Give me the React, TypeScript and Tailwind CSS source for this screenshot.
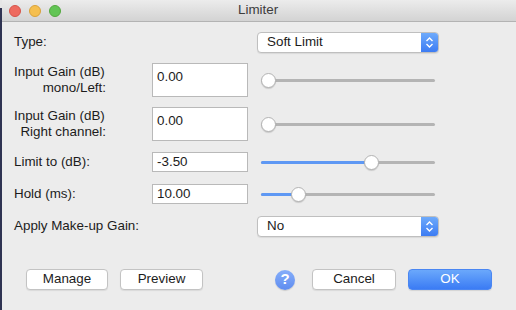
import React from "react";

const font = { fontFamily: '"Helvetica Neue", "Liberation Sans", Arial, sans-serif' };

function Slider({ frac }: { frac: number }) {
  const thumbCenter = 7 + frac * 159;
  return (
    <div className="flex h-full items-center pl-[4px]">
      <div className="relative h-[3px] w-[174px] rounded-full bg-[#b4b4b4]">
        <div
          className="h-[3px] rounded-full bg-[#5e98f4]"
          style={{ width: frac > 0 ? thumbCenter : 0 }}
        />
        <div
          className="absolute top-[-6px] h-[15px] w-[15px] rounded-full border border-[#b3b3b3] bg-white shadow-[0_1px_1px_rgba(0,0,0,0.15)]"
          style={{ left: thumbCenter - 7.5 }}
        />
      </div>
    </div>
  );
}

function Select({ value }: { value: string }) {
  return (
    <div className="flex h-[21px] w-[182px] rounded-[4px] border border-[#bfbfbf] bg-white shadow-[0_1px_1px_rgba(0,0,0,0.08)]">
      <div className="flex flex-1 items-center pl-[9px] text-[13.4px] text-[#1c1c1c]">{value}</div>
      <div className="flex w-[17px] items-center justify-center rounded-r-[3px] bg-gradient-to-b from-[#6eaafb] to-[#3d7cf3]">
        <svg width="9" height="13" viewBox="0 0 9 13">
          <path d="M1.5 5 L4.5 2 L7.5 5" stroke="white" strokeWidth="1.4" fill="none" />
          <path d="M1.5 8 L4.5 11 L7.5 8" stroke="white" strokeWidth="1.4" fill="none" />
        </svg>
      </div>
    </div>
  );
}

function Input({ value, tall }: { value: string; tall?: boolean }) {
  return (
    <div
      className={
        "w-[96px] border border-[#b9b9b9] bg-white pl-[4px] text-[13.4px] text-[#1c1c1c] " +
        (tall ? "h-[34px] pt-[4px] leading-[17px]" : "flex h-[20px] items-center")
      }
    >
      {value}
    </div>
  );
}

function Button({ label, w }: { label: string; w: string }) {
  return (
    <div
      className={
        "flex h-[21px] items-center justify-center rounded-[4px] border border-[#c3c3c3] bg-white text-[13.4px] text-[#1c1c1c] shadow-[0_1px_1px_rgba(0,0,0,0.08)] " +
        w
      }
    >
      {label}
    </div>
  );
}

export default function App() {
  return (
    <div className="flex h-[310px] w-[516px] overflow-hidden bg-[#ececec]" style={font}>
      <div className="flex w-[2px] flex-col">
        <div className="h-[8px] bg-[#e6e6e6]" />
        <div className="flex-1 bg-[#2f3352]" />
      </div>
      <div className="flex flex-1 flex-col">
        {/* title bar */}
        <div className="flex h-[22px] items-center border-b border-[#b3b3b3] bg-gradient-to-b from-[#ececec] to-[#d3d3d3]">
          <div className="flex items-center gap-[8px] pl-[7px]">
            <div className="h-[12px] w-[12px] rounded-full border border-[#d6544a] bg-[#ee6a5f]" />
            <div className="h-[12px] w-[12px] rounded-full border border-[#d9a23a] bg-[#f5bf4f]" />
            <div className="h-[12px] w-[12px] rounded-full border border-[#53a83f] bg-[#62c555]" />
          </div>
          <div className="flex-1 pl-[177px] text-[13.4px] text-[#3d3d3d]">Limiter</div>
        </div>

        {/* body */}
        <div className="flex flex-col pl-[12px] pt-[10px] text-[13.4px] text-[#1c1c1c]">
          <div className="flex h-[21px] items-center">
            <div className="w-[243px]">Type:</div>
            <Select value="Soft Limit" />
          </div>

          <div className="mt-[10px] flex h-[34px] items-center">
            <div className="w-[138px] pr-[46px] text-right leading-[16px]">
              <div className="text-left">Input Gain (dB)</div>
              <div>mono/Left:</div>
            </div>
            <Input value="0.00" tall />
            <div className="ml-[9px] h-full">
              <Slider frac={0} />
            </div>
          </div>

          <div className="mt-[10px] flex h-[34px] items-center">
            <div className="w-[138px] pr-[46px] text-right leading-[16px]">
              <div className="text-left">Input Gain (dB)</div>
              <div>Right channel:</div>
            </div>
            <Input value="0.00" tall />
            <div className="ml-[9px] h-full">
              <Slider frac={0} />
            </div>
          </div>

          <div className="mt-[11px] flex h-[20px] items-center">
            <div className="w-[138px]">Limit to (dB):</div>
            <Input value="-3.50" />
            <div className="ml-[9px] h-full">
              <Slider frac={0.654} />
            </div>
          </div>

          <div className="mt-[12px] flex h-[20px] items-center">
            <div className="w-[138px]">Hold (ms):</div>
            <Input value="10.00" />
            <div className="ml-[9px] h-full">
              <Slider frac={0.189} />
            </div>
          </div>

          <div className="mt-[12px] flex h-[21px] items-center">
            <div className="w-[243px]">Apply Make-up Gain:</div>
            <Select value="No" />
          </div>

          <div className="mt-[32px] flex h-[21px] items-center pl-[12px]">
            <Button label="Manage" w="w-[82px]" />
            <div className="ml-[12px]">
              <Button label="Preview" w="w-[83px]" />
            </div>
            <div className="ml-[72px] flex h-[20px] w-[20px] items-center justify-center rounded-full bg-gradient-to-b from-[#86aefa] to-[#5f8cef] text-[15px] font-bold text-white shadow-[0_1px_1px_rgba(0,0,0,0.15)]">
              ?
            </div>
            <div className="ml-[17px]">
              <Button label="Cancel" w="w-[84px]" />
            </div>
            <div className="ml-[12px] flex h-[21px] w-[84px] items-center justify-center rounded-[4px] border border-[#4a86f2] bg-gradient-to-b from-[#6ba8fb] to-[#3b7bf4] text-[13.4px] text-white shadow-[0_1px_1px_rgba(0,0,0,0.1)]">
              OK
            </div>
          </div>
        </div>
      </div>
    </div>
  );
}
